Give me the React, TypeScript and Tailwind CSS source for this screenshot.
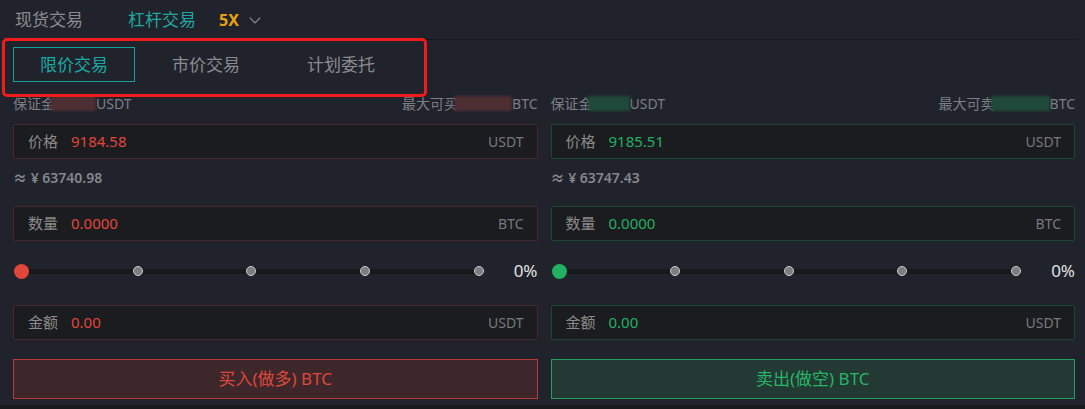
import React from 'react';

type Side = 'buy' | 'sell';

const theme = {
  buy: {
    border: 'border-[#47292d]',
    value: 'text-[#e0463b]',
    dot: 'bg-[#e0463b]',
    btn: 'border-[#b93a33] bg-[#3d272b] text-[#de473c]',
    blur: 'bg-[#4d2e33]',
  },
  sell: {
    border: 'border-[#1c4636]',
    value: 'text-[#22b063]',
    dot: 'bg-[#22b063]',
    btn: 'border-[#21a05d] bg-[#223a33] text-[#26b466]',
    blur: 'bg-[#1f4a3a]',
  },
};

const Field: React.FC<{ side: Side; label: string; value: string; unit: string }> = ({ side, label, value, unit }) => (
  <div className={`flex items-center h-[35px] rounded-[2px] border bg-[#1b1c1f] pl-[14px] pr-[13px] ${theme[side].border}`}>
    <span className="text-[15px] text-[#8b8b8b] w-[43px]">{label}</span>
    <span className={`text-[15px] ${theme[side].value}`}>{value}</span>
    <span className="ml-auto text-[14px] text-[#77797e]">{unit}</span>
  </div>
);

const Slider: React.FC<{ side: Side }> = ({ side }) => (
  <div className="flex items-center h-[30px]">
    <div className="relative flex-1 h-[14px] mr-[30px] ml-[1px]">
      <div className="absolute left-[7px] right-0 top-[5px] h-[5px] bg-[#18191c]" />
      <div className="relative flex items-center justify-between h-full">
        <span className={`w-[15px] h-[15px] rounded-full ${theme[side].dot}`} />
        <span className="w-[10px] h-[10px] rounded-full bg-[#7c7d80] border border-[#cfcfcf]" />
        <span className="w-[10px] h-[10px] rounded-full bg-[#7c7d80] border border-[#cfcfcf]" />
        <span className="w-[10px] h-[10px] rounded-full bg-[#7c7d80] border border-[#cfcfcf]" />
        <span className="w-[10px] h-[10px] rounded-full bg-[#7c7d80] border border-[#cfcfcf]" />
      </div>
    </div>
    <span className="text-[17px] text-[#e2e2e2]">0%</span>
  </div>
);

const Column: React.FC<{ side: Side; price: string; cny: string }> = ({ side, price, cny }) => {
  const t = theme[side];
  const buy = side === 'buy';
  return (
    <div className="flex flex-col">
      <div className="flex items-center justify-between h-[21px] text-[14px] text-[#7d7f85]">
        <div className="flex items-center">
          <span>保证金</span>
          <span className={`${buy ? 'w-[46px]' : 'w-[42px]'} h-[15px] ${t.blur} blur-[1.5px] -ml-[5px]`} />
          <span>USDT</span>
        </div>
        <div className="flex items-center">
          <span>{buy ? '最大可买' : '最大可卖'}</span>
          <span className={`${buy ? 'w-[58px]' : 'w-[59px]'} h-[15px] ${t.blur} blur-[1.5px] -ml-[4px]`} />
          <span>BTC</span>
        </div>
      </div>
      <div className="mt-[10px]">
        <Field side={side} label="价格" value={price} unit="USDT" />
      </div>
      <div className="mt-[8px] h-[18px] text-[14px] font-semibold text-[#85878c]">≈ ¥ {cny}</div>
      <div className="mt-[21px]">
        <Field side={side} label="数量" value="0.0000" unit="BTC" />
      </div>
      <div className="mt-[15px]">
        <Slider side={side} />
      </div>
      <div className="mt-[19px]">
        <Field side={side} label="金额" value="0.00" unit="USDT" />
      </div>
      <button className={`mt-[19px] h-[40px] border text-[17px] ${t.btn}`}>
        {buy ? '买入(做多) BTC' : '卖出(做空) BTC'}
      </button>
    </div>
  );
};

export default function App() {
  return (
    <div
      className="relative w-[1085px] h-[409px] overflow-hidden bg-[#20232b] flex flex-col"
      style={{ fontFamily: '"Noto Sans", "Noto Sans CJK SC", sans-serif' }}
    >
      <div className="flex items-center h-[40px] border-b border-[#17191d] mr-[6px] text-[17px]">
        <span className="ml-[15px] text-[#8a8b8f]">现货交易</span>
        <span className="ml-[45px] text-[#1fa8a2]">杠杆交易</span>
        <span className="ml-[23px] font-bold text-[#e6a20f] text-[16px]">5X</span>
        <svg className="ml-[9px] w-[14px] h-[14px] text-[#8a8b8f]" viewBox="0 0 12 12" fill="none" stroke="currentColor" strokeWidth="1.1">
          <path d="M1.5 4 L6 8.5 L10.5 4" />
        </svg>
      </div>
      <div className="flex items-center h-[35px] mt-[7px] pl-[13px] text-[17px]">
        <div className="w-[122px] h-[35px] flex items-center justify-center border border-[#179f99] text-[#1aa9a3]">限价交易</div>
        <div className="w-[142px] text-center text-[#8a8b8f]">市价交易</div>
        <div className="w-[128px] text-center text-[#8a8b8f]">计划委托</div>
      </div>
      <div className="grid grid-cols-2 gap-[13px] pl-[13px] pr-[10px] mt-[11px]">
        <Column side="buy" price="9184.58" cny="63740.98" />
        <Column side="sell" price="9185.51" cny="63747.43" />
      </div>
      <div className="mt-auto h-[4px] bg-[#17191d]" />
      <div className="absolute left-[2px] top-[38px] w-[425px] h-[59px] rounded-[5px] border-[3px] border-[#f01c1c] pointer-events-none" />
    </div>
  );
}
